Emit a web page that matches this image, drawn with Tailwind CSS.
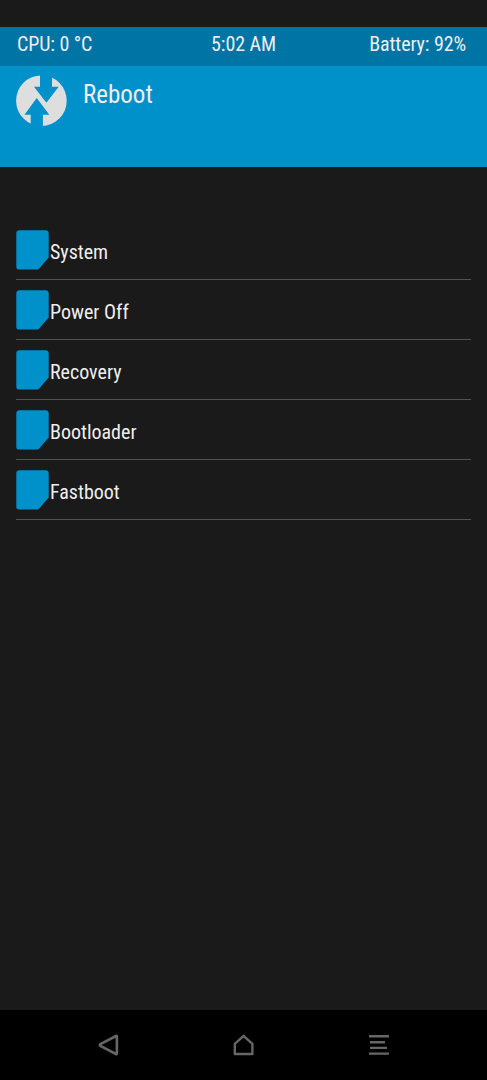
<!DOCTYPE html>
<html lang="en">

<head>
    <meta charset="UTF-8" />
    <meta name="viewport" content="width=device-width, initial-scale=1.0" />
    <title>Reboot</title>
    <script src="https://cdn.jsdelivr.net/npm/@tailwindcss/browser@4"></script>
</head>

<body class="flex flex-col h-screen overflow-hidden bg-[#1a1a1a] pt-[27px] font-['Roboto_Condensed',Roboto,sans-serif] font-stretch-75% text-[20px] text-[#eeeeee]">
    <!-- Status bar -->
    <div class="grid grid-cols-3 h-[39px] bg-[#0075a5] pl-[17px] pr-[21px] pt-[3px] leading-[28px] tracking-[-0.1px] shrink-0">
        <span>CPU: 0 °C</span>
        <span class="text-center pl-[4px]">5:02 AM</span>
        <span class="text-right">Battery: 92%</span>
    </div>

    <!-- Header -->
    <header class="flex h-[101px] bg-[#0090ca] pl-4 pt-[9px] shrink-0">
        <svg class="w-[51px] h-[51px]" viewBox="0 0 51 51">
            <circle cx="25.4" cy="25.7" r="25.3" fill="#dedede" />
            <path fill="#0090ca" d="M24 0H36V11.7H42.7L30.4 27.7L18 11.7H24ZM20.7 23L33.3 39.7H26.9V51H14.7V39.7H8.5Z" />
        </svg>
        <h1 class="ml-4 text-[25px] leading-[40px]">Reboot</h1>
    </header>

    <!-- Reboot targets -->
    <ul class="mt-[53px] px-4 grow">
        <li class="flex h-[60px] pt-[10px] border-b border-[#525252]">
            <svg class="w-[33px] h-[40px]" viewBox="0 0 33 40">
                <path fill="#0090ca" d="M3.500 .3H29.500Q32.700 .3 32.700 3.500V27.500L23 38.700Q22.200 39.600 21 39.600H3.500Q.3 39.600 .3 36.400V3.500Q.3 .3 3.500 .3Z" />
            </svg>
            <span class="ml-px leading-[45px]">System</span>
        </li>
        <li class="flex h-[60px] pt-[10px] border-b border-[#525252]">
            <svg class="w-[33px] h-[40px]" viewBox="0 0 33 40">
                <path fill="#0090ca" d="M3.500 .3H29.500Q32.700 .3 32.700 3.500V27.500L23 38.700Q22.200 39.600 21 39.600H3.500Q.3 39.600 .3 36.400V3.500Q.3 .3 3.500 .3Z" />
            </svg>
            <span class="ml-px leading-[45px]">Power Off</span>
        </li>
        <li class="flex h-[60px] pt-[10px] border-b border-[#525252]">
            <svg class="w-[33px] h-[40px]" viewBox="0 0 33 40">
                <path fill="#0090ca" d="M3.500 .3H29.500Q32.700 .3 32.700 3.500V27.500L23 38.700Q22.200 39.600 21 39.600H3.500Q.3 39.600 .3 36.400V3.500Q.3 .3 3.500 .3Z" />
            </svg>
            <span class="ml-px leading-[45px]">Recovery</span>
        </li>
        <li class="flex h-[60px] pt-[10px] border-b border-[#525252]">
            <svg class="w-[33px] h-[40px]" viewBox="0 0 33 40">
                <path fill="#0090ca" d="M3.500 .3H29.500Q32.700 .3 32.700 3.500V27.500L23 38.700Q22.200 39.600 21 39.600H3.500Q.3 39.600 .3 36.400V3.500Q.3 .3 3.500 .3Z" />
            </svg>
            <span class="ml-px leading-[45px]">Bootloader</span>
        </li>
        <li class="flex h-[60px] pt-[10px] border-b border-[#525252]">
            <svg class="w-[33px] h-[40px]" viewBox="0 0 33 40">
                <path fill="#0090ca" d="M3.500 .3H29.500Q32.700 .3 32.700 3.500V27.500L23 38.700Q22.200 39.600 21 39.600H3.500Q.3 39.600 .3 36.400V3.500Q.3 .3 3.500 .3Z" />
            </svg>
            <span class="ml-px leading-[45px]">Fastboot</span>
        </li>
    </ul>

    <!-- Navigation bar -->
    <nav class="flex justify-between items-center h-[70px] bg-black px-[97px] shrink-0 text-[#666666]">
        <svg class="w-[22px] h-[24px]" viewBox="0 0 22 24" fill="none" stroke="currentColor" stroke-width="2.600" stroke-linejoin="round">
            <path d="M19 3Q19.900 2.600 19.900 3.500V20.500Q19.900 21.400 19 21L3.400 12.800Q2.200 12 3.400 11.200Z" />
        </svg>
        <svg class="w-[22px] h-[24px]" viewBox="0 0 22 24" fill="none" stroke="currentColor" stroke-width="2.400" stroke-linejoin="round">
            <path d="M1.800 10.800L10.600 2.800L19.400 10.800V21H1.800Z" />
        </svg>
        <svg class="w-[22px] h-[24px]" viewBox="0 0 22 24" fill="none" stroke="currentColor" stroke-width="2.400">
            <path d="M1 3.300H21M2 9.200H17M2 14.900H19M1 20.600H21" />
        </svg>
    </nav>
</body>

</html>
